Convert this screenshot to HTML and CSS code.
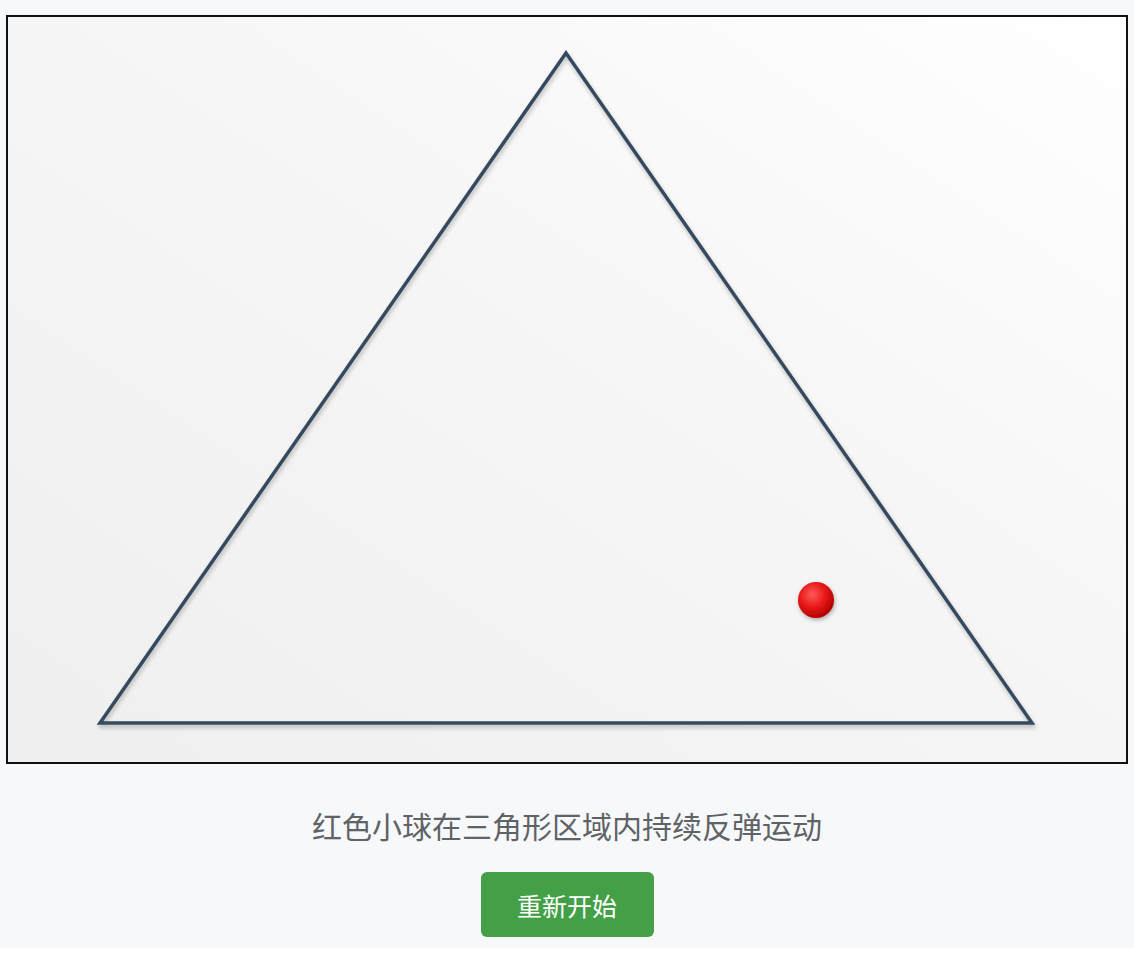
FILE: index.html
```html
<!DOCTYPE html>
<html>
<head>
    <title>三角形反弹小球</title>
    <meta charset="utf-8">
    <meta name="viewport" content="width=device-width, initial-scale=1">
    <link rel="stylesheet" href="styles.css">
</head>
<body>
    <div class="page">
        <div class="stage">
            <svg class="board" width="1118" height="745" viewBox="0 0 1118 745">
                <defs>
                    <radialGradient id="ballFill" cx="40%" cy="35%" r="65%">
                        <stop offset="0%" stop-color="#ff5a5a"/>
                        <stop offset="55%" stop-color="#e81818"/>
                        <stop offset="100%" stop-color="#b30000"/>
                    </radialGradient>
                    <filter id="lineShadow" x="-10%" y="-10%" width="120%" height="120%">
                        <feDropShadow dx="1" dy="3" stdDeviation="2" flood-color="#000" flood-opacity="0.25"/>
                    </filter>
                    <filter id="ballShadow" x="-50%" y="-50%" width="200%" height="200%">
                        <feDropShadow dx="1" dy="2" stdDeviation="2" flood-color="#000" flood-opacity="0.3"/>
                    </filter>
                </defs>
                <!-- 三角形边界 -->
                <polygon points="558,36 92,706 1024,706" fill="none" stroke="#34495e" stroke-width="3.5" stroke-linejoin="miter" filter="url(#lineShadow)"/>
                <!-- 小球 -->
                <circle id="ball" cx="808" cy="583" r="18" fill="url(#ballFill)" filter="url(#ballShadow)"/>
            </svg>
        </div>
        <p class="caption">红色小球在三角形区域内持续反弹运动</p>
        <button class="restart">重新开始</button>
    </div>
</body>
</html>
```

FILE: styles.css
```css
html {
    background: #ffffff;
}

body {
    margin: 0;
    background-color: #f7f8fa;
    font-family: "Noto Sans CJK SC", "Noto Sans", sans-serif;
}

.page {
    display: flex;
    flex-direction: column;
    align-items: center;
    padding: 15px 6px 11px;
}

.stage {
    width: 1118px;
    height: 745px;
    border: 2px solid #111;
    background: linear-gradient(to top right, #efefef 0%, #f6f6f6 55%, #ffffff 100%);
}

.board {
    display: block;
}

.caption {
    margin: 40px 0 0;
    font-size: 30px;
    line-height: 42px;
    color: #606366;
}

.restart {
    margin-top: 26px;
    width: 173px;
    height: 65px;
    background-color: #43a047;
    color: #ffffff;
    border: none;
    border-radius: 6px;
    font-family: "Noto Sans CJK SC", "Noto Sans", sans-serif;
    font-size: 25px;
    cursor: pointer;
}
```
